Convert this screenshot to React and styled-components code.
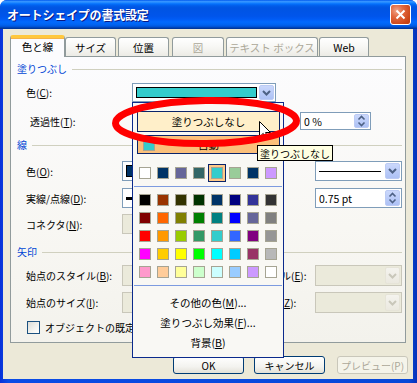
import React from 'react'
import styled, { createGlobalStyle, css } from 'styled-components'

const GlobalStyle = createGlobalStyle`
  html, body { margin: 0; padding: 0; background: #ffffff; }
  body {
    font-family: "Noto Sans CJK JP", "Noto Sans", "Liberation Sans", sans-serif;
    font-size: 10px;
    color: #000;
  }
  * { box-sizing: border-box; }
`

const recent = ['#FFFFFF', '#003366', '#666699', '#336666', '#33CCCC', '#99CC99', '#003366', '#CC99FF']
const palette = [
  '#000000', '#993300', '#333300', '#003300', '#003366', '#000080', '#333399', '#333333',
  '#800000', '#FF6600', '#808000', '#008000', '#008080', '#0000FF', '#666699', '#808080',
  '#FF0000', '#FF9900', '#99CC00', '#339966', '#33CCCC', '#3366FF', '#800080', '#969696',
  '#FF00FF', '#FFCC00', '#FFFF00', '#00FF00', '#00FFFF', '#00CCFF', '#993366', '#B8B8B8',
  '#FF99CC', '#FFCC99', '#FFFF99', '#CCFFCC', '#CCFFFF', '#99CCFF', '#CC99FF', '#FFFFFF',
]

const tabs = [
  { label: '色と線', w: 55, ml: 0, active: true },
  { label: 'サイズ', w: 51, ml: 0 },
  { label: '位置', w: 51, ml: 2 },
  { label: '図', w: 52, ml: 3, disabled: true },
  { label: 'テキスト ボックス', w: 92, ml: 2, disabled: true },
  { label: 'Web', w: 50, ml: 1 },
]

const Frame = styled.div`
  position: relative;
  width: 417px;
  height: 383px;
  display: flex;
  flex-direction: column;
  background: linear-gradient(to right, #0831d9 0%, #0a4be6 2%, #0848d8 98%, #0631b8 100%);
  border-radius: 7px 7px 0 0;
  overflow: hidden;
`

const TitleBar = styled.div`
  height: 29px;
  flex: none;
  display: flex;
  align-items: center;
  justify-content: space-between;
  padding: 0 6px 0 7px;
  background: linear-gradient(to bottom, #0058ee 0%, #3593ff 5%, #288eff 8%, #127dff 11%, #036ffc 14%,
    #0262ee 18%, #0057e5 24%, #0054e3 30%, #0055eb 56%, #005bf5 66%, #026afe 76%, #0062ef 86%,
    #0052d6 92%, #0040ab 96%, #003092 100%);
`

const TitleText = styled.span`
  color: #fff;
  font-weight: bold;
  font-size: 12px;
  letter-spacing: -0.2px;
  text-shadow: 1px 1px 0 #0a1883;
`

const CloseButton = styled.div`
  width: 21px;
  height: 21px;
  border: 1px solid #fff;
  border-radius: 3px;
  display: flex;
  align-items: center;
  justify-content: center;
  background: radial-gradient(circle at 30% 30%, #f0a58a 0%, #e2683f 35%, #cc4618 75%, #b93a10 100%);
`

const Body = styled.div`
  flex: 1;
  margin: 0 4px 4px 3px;
  background: #ece9d8;
  padding: 6px 7px 0 7px;
  display: flex;
  flex-direction: column;
`

const TabRow = styled.div`
  display: flex;
  align-items: flex-end;
  height: 21px;
`

const Tab = styled.div`
  position: relative;
  width: ${p => p.$w}px;
  margin-left: ${p => p.$ml}px;
  height: 19px;
  display: flex;
  align-items: center;
  justify-content: center;
  font-size: 10.5px;
  border: 1px solid #919b9c;
  border-bottom: none;
  border-radius: 3px 3px 0 0;
  background: linear-gradient(to bottom, #ffffff 0%, #f7f7f4 50%, #ecebe5 100%);
  color: ${p => (p.$disabled ? '#aca899' : '#000')};
  ${p => p.$active && css`
    z-index: 1;
    height: 22px;
    margin-bottom: -1px;
    background: #fcfcfe;
    border-top: 3px solid #ffc83c;
    box-shadow: inset 0 1px 0 #f5b347;
    padding-bottom: 2px;
  `}
`

const Panel = styled.div`
  width: 396px;
  height: 287px;
  border: 1px solid #919b9c;
  background: linear-gradient(to bottom, #fcfcfe 0%, #f8f7f3 60%, #f3f2ec 100%);
  padding: 0 3px 0 6px;
  display: flex;
  flex-direction: column;
`

const SectionHeader = styled.div`
  display: flex;
  align-items: center;
  height: 13px;
  margin-top: ${p => p.$mt}px;
  color: #0046d5;
  &::after {
    content: '';
    flex: 1;
    height: 1px;
    margin-left: 5px;
    margin-top: 2px;
    background: #d0d0bf;
  }
`

const Row = styled.div`
  display: flex;
  align-items: center;
  height: ${p => p.$h}px;
  margin-top: ${p => p.$mt}px;
`

const Label = styled.div`
  flex: none;
  width: ${p => p.$w}px;
  padding-left: ${p => p.$pl || 0}px;
  margin-left: ${p => p.$ml || 0}px;
  white-space: nowrap;
`

const Combo = styled.div`
  flex: none;
  width: ${p => p.$w}px;
  height: 100%;
  display: flex;
  align-items: stretch;
  padding: 1px;
  border: 1px solid ${p => (p.$disabled ? '#c9c7ba' : '#7f9db9')};
  background: ${p => (p.$disabled ? '#ebeadb' : '#fff')};
`

const ComboValue = styled.div`
  flex: 1;
  display: flex;
  align-items: center;
  padding: 2px;
  font-size: 10.5px;
`

const ColorFill = styled.div`
  flex: 1;
  align-self: stretch;
  background: ${p => p.$c};
  border: 1px solid #000;
`

const LineSample = styled.div`
  flex: 1;
  height: ${p => p.$t}px;
  background: #000;
  margin-right: 2px;
`

const DropButton = styled.div`
  flex: none;
  width: 15px;
  display: flex;
  align-items: center;
  justify-content: center;
  border: 1px solid ${p => (p.$disabled ? '#e6e4d8' : '#bccbf4')};
  border-radius: 2px;
  background: ${p => (p.$disabled
    ? 'linear-gradient(to bottom, #f4f3ee, #ebe9e0)'
    : 'linear-gradient(to bottom, #cbd8fb 0%, #b8caf8 60%, #adc1f5 100%)')};
`

const SliderTrack = styled.div`
  flex: none;
  width: 150px;
  height: 4px;
  margin-right: 18px;
  border: 1px solid #9d9c99;
  background: #ecebe6;
`

const CheckBox = styled.div`
  flex: none;
  width: 13px;
  height: 13px;
  margin: 0 5px 0 10px;
  border: 1px solid #1c5180;
  background: linear-gradient(135deg, #dcdcd7 0%, #f4f4f0 60%, #ffffff 100%);
`

const ButtonRow = styled.div`
  display: flex;
  justify-content: flex-end;
  margin: 13px -2px 0 0;
`

const PushButton = styled.div`
  width: 71px;
  height: 18px;
  margin-left: ${p => p.$ml || 0}px;
  display: flex;
  align-items: center;
  justify-content: center;
  border-radius: 3px;
  border: 1px solid ${p => (p.$disabled ? '#c9c7ba' : '#003c74')};
  color: ${p => (p.$disabled ? '#aca899' : '#000')};
  background: ${p => (p.$disabled
    ? '#f5f4ea'
    : 'linear-gradient(to bottom, #ffffff 0%, #f3f3ef 60%, #e3e1d8 100%)')};
`

/* ---- overlays ---- */

const Popup = styled.div`
  position: absolute;
  left: 132px;
  top: 102px;
  width: 152px;
  height: 256px;
  border: 1px solid #0b2a8c;
  background: #f9f8f4;
  display: flex;
  flex-direction: column;
  z-index: 5;
`

const NoFillButton = styled.div`
  margin: 8px 3px 0 4px;
  height: 21px;
  display: flex;
  align-items: center;
  justify-content: center;
  border: 1px solid #0a246a;
  background: #ffefc9;
  font-size: 10.5px;
`

const AutoButton = styled.div`
  margin: 3px 3px 0 4px;
  height: 19px;
  display: flex;
  align-items: center;
  border: 1px solid #0a246a;
  background-color: #ffc987;
  background-image: radial-gradient(#f6b56c 0.6px, transparent 0.8px);
  background-size: 2px 2px;
  font-size: 10.5px;
`

const AutoText = styled.span`
  flex: 1;
  text-align: center;
  padding-right: 17px;
`

const SwatchRow = styled.div`
  display: flex;
  margin-top: 10px;
  padding-left: 3px;
`

const SwatchGrid = styled.div`
  display: grid;
  grid-template-columns: repeat(8, 18px);
  grid-auto-rows: 18px;
  margin-top: 4px;
  padding-left: 3px;
`

const Cell = styled.div`
  width: 18px;
  height: 18px;
  display: flex;
  align-items: center;
  justify-content: center;
  ${p => p.$selected && css`
    background: #ffc987;
    border: 1px solid #0a246a;
  `}
`

const Swatch = styled.div`
  flex: none;
  width: 12px;
  height: 12px;
  margin-left: ${p => p.$ml || 0}px;
  border: 1px solid #a6a493;
  background: ${p => p.$c};
`

const Separator = styled.div`
  height: 1px;
  margin: 4px 1px 0 1px;
  background: #7d9be0;
`

const MenuItem = styled.div`
  height: 20px;
  margin-top: ${p => p.$mt || 0}px;
  display: flex;
  align-items: center;
  justify-content: center;
  font-size: 10.5px;
`

const Tooltip = styled.div`
  position: absolute;
  left: 257px;
  top: 145px;
  height: 16px;
  padding: 0 2px;
  display: flex;
  align-items: center;
  border: 1px solid #000;
  background: #ffffe1;
  z-index: 6;
`

const Cursor = styled.svg`
  position: absolute;
  left: 259px;
  top: 121px;
  z-index: 7;
`

const Annotation = styled.svg`
  position: absolute;
  left: 106px;
  top: 93px;
  z-index: 8;
  pointer-events: none;
`

const Chevron = ({ color = '#4d6185' }) => (
  <svg width="9" height="6" viewBox="0 0 9 6">
    <path d="M1 1 L4.5 4.5 L8 1" fill="none" stroke={color} strokeWidth="2" />
  </svg>
)

const SpinArrows = () => (
  <svg width="9" height="12" viewBox="0 0 9 12">
    <path d="M1.5 4.5 L4.5 1.5 L7.5 4.5" fill="none" stroke="#4d6185" strokeWidth="1.6" />
    <path d="M1.5 7.5 L4.5 10.5 L7.5 7.5" fill="none" stroke="#4d6185" strokeWidth="1.6" />
  </svg>
)

const Acc = styled.u`
  text-underline-offset: 1px;
`

export default function App() {
  return (
    <>
      <GlobalStyle />
      <Frame>
        <TitleBar>
          <TitleText>オートシェイプの書式設定</TitleText>
          <CloseButton>
            <svg width="11" height="11" viewBox="0 0 11 11">
              <path d="M1.5 1.5 L9.5 9.5 M9.5 1.5 L1.5 9.5" stroke="#fff" strokeWidth="2" />
            </svg>
          </CloseButton>
        </TitleBar>

        <Body>
          <TabRow>
            {tabs.map(t => (
              <Tab key={t.label} $w={t.w} $ml={t.ml} $active={t.active} $disabled={t.disabled}>
                {t.label}
              </Tab>
            ))}
          </TabRow>

          <Panel>
            <SectionHeader $mt={5}>塗りつぶし</SectionHeader>
            <Row $h={19} $mt={8}>
              <Label $w={115} $pl={9}>色(<Acc>C</Acc>):</Label>
              <Combo $w={144}>
                <ComboValue><ColorFill $c="#33cccc" /></ComboValue>
                <DropButton><Chevron /></DropButton>
              </Combo>
            </Row>
            <Row $h={18} $mt={10}>
              <Label $w={115} $pl={13}>透過性(<Acc>T</Acc>):</Label>
              <SliderTrack />
              <Combo $w={71}>
                <ComboValue>0 %</ComboValue>
                <DropButton><SpinArrows /></DropButton>
              </Combo>
            </Row>

            <SectionHeader $mt={8}>線</SectionHeader>
            <Row $h={20} $mt={10}>
              <Label $w={105} $pl={9}>色(<Acc>O</Acc>):</Label>
              <Combo $w={70}>
                <ComboValue><ColorFill $c="#003366" /></ComboValue>
                <DropButton><Chevron /></DropButton>
              </Combo>
              <Label $w={116} $ml={7}>スタイル(<Acc>S</Acc>):</Label>
              <Combo $w={87}>
                <ComboValue><LineSample $t={1} /></ComboValue>
                <DropButton><Chevron /></DropButton>
              </Combo>
            </Row>
            <Row $h={20} $mt={7}>
              <Label $w={105} $pl={9}>実線/点線(<Acc>D</Acc>):</Label>
              <Combo $w={70}>
                <ComboValue><LineSample $t={3} /></ComboValue>
                <DropButton><Chevron /></DropButton>
              </Combo>
              <Label $w={116} $ml={7}>太さ(<Acc>W</Acc>):</Label>
              <Combo $w={87}>
                <ComboValue>0.75 pt</ComboValue>
                <DropButton><SpinArrows /></DropButton>
              </Combo>
            </Row>
            <Row $h={20} $mt={6}>
              <Label $w={105} $pl={9}>コネクタ(<Acc>N</Acc>):</Label>
              <Combo $w={70} $disabled>
                <ComboValue />
                <DropButton $disabled><Chevron color="#c9c7ba" /></DropButton>
              </Combo>
            </Row>

            <SectionHeader $mt={11}>矢印</SectionHeader>
            <Row $h={21} $mt={7}>
              <Label $w={105} $pl={9}>始点のスタイル(<Acc>B</Acc>):</Label>
              <Combo $w={70} $disabled>
                <ComboValue />
                <DropButton $disabled><Chevron color="#c9c7ba" /></DropButton>
              </Combo>
              <Label $w={94} $ml={29}>終点のスタイル(<Acc>E</Acc>):</Label>
              <Combo $w={87} $disabled>
                <ComboValue />
                <DropButton $disabled><Chevron color="#c9c7ba" /></DropButton>
              </Combo>
            </Row>
            <Row $h={21} $mt={6}>
              <Label $w={105} $pl={9}>始点のサイズ(<Acc>I</Acc>):</Label>
              <Combo $w={70} $disabled>
                <ComboValue />
                <DropButton $disabled><Chevron color="#c9c7ba" /></DropButton>
              </Combo>
              <Label $w={94} $ml={29}>終点のサイズ(<Acc>Z</Acc>):</Label>
              <Combo $w={87} $disabled>
                <ComboValue />
                <DropButton $disabled><Chevron color="#c9c7ba" /></DropButton>
              </Combo>
            </Row>
            <Row $h={13} $mt={8}>
              <CheckBox />
              <Label $w={200}>オブジェクトの既定値に設定(<Acc>F</Acc>)</Label>
            </Row>
          </Panel>

          <ButtonRow>
            <PushButton>OK</PushButton>
            <PushButton $ml={10}>キャンセル</PushButton>
            <PushButton $ml={12} $disabled>プレビュー(P)</PushButton>
          </ButtonRow>
        </Body>

        <Popup>
          <NoFillButton>塗りつぶしなし</NoFillButton>
          <AutoButton>
            <Swatch $c="#33cccc" $ml={5} />
            <AutoText>自動</AutoText>
          </AutoButton>
          <SwatchRow>
            {recent.map((c, i) => (
              <Cell key={i} $selected={i === 4}><Swatch $c={c} /></Cell>
            ))}
          </SwatchRow>
          <Separator />
          <SwatchGrid>
            {palette.map((c, i) => (
              <Cell key={i}><Swatch $c={c} /></Cell>
            ))}
          </SwatchGrid>
          <Separator />
          <MenuItem $mt={6}>その他の色(<Acc>M</Acc>)...</MenuItem>
          <MenuItem>塗りつぶし効果(<Acc>F</Acc>)...</MenuItem>
          <MenuItem>背景(<Acc>B</Acc>)</MenuItem>
        </Popup>

        <Tooltip>塗りつぶしなし</Tooltip>

        <Cursor width="13" height="20" viewBox="0 0 13 20">
          <path d="M0.5 0.5 L0.5 16 L4.2 12.4 L6.8 18.5 L9.2 17.5 L6.6 11.5 L11.5 11.5 Z"
            fill="#fff" stroke="#000" strokeWidth="1" />
        </Cursor>

        <Annotation width="202" height="60" viewBox="0 0 202 60">
          <ellipse cx="100" cy="29" rx="90.5" ry="21.5" fill="none" stroke="#ff0000"
            strokeWidth="7" transform="rotate(-0.8 100 29)" />
        </Annotation>
      </Frame>
    </>
  )
}
